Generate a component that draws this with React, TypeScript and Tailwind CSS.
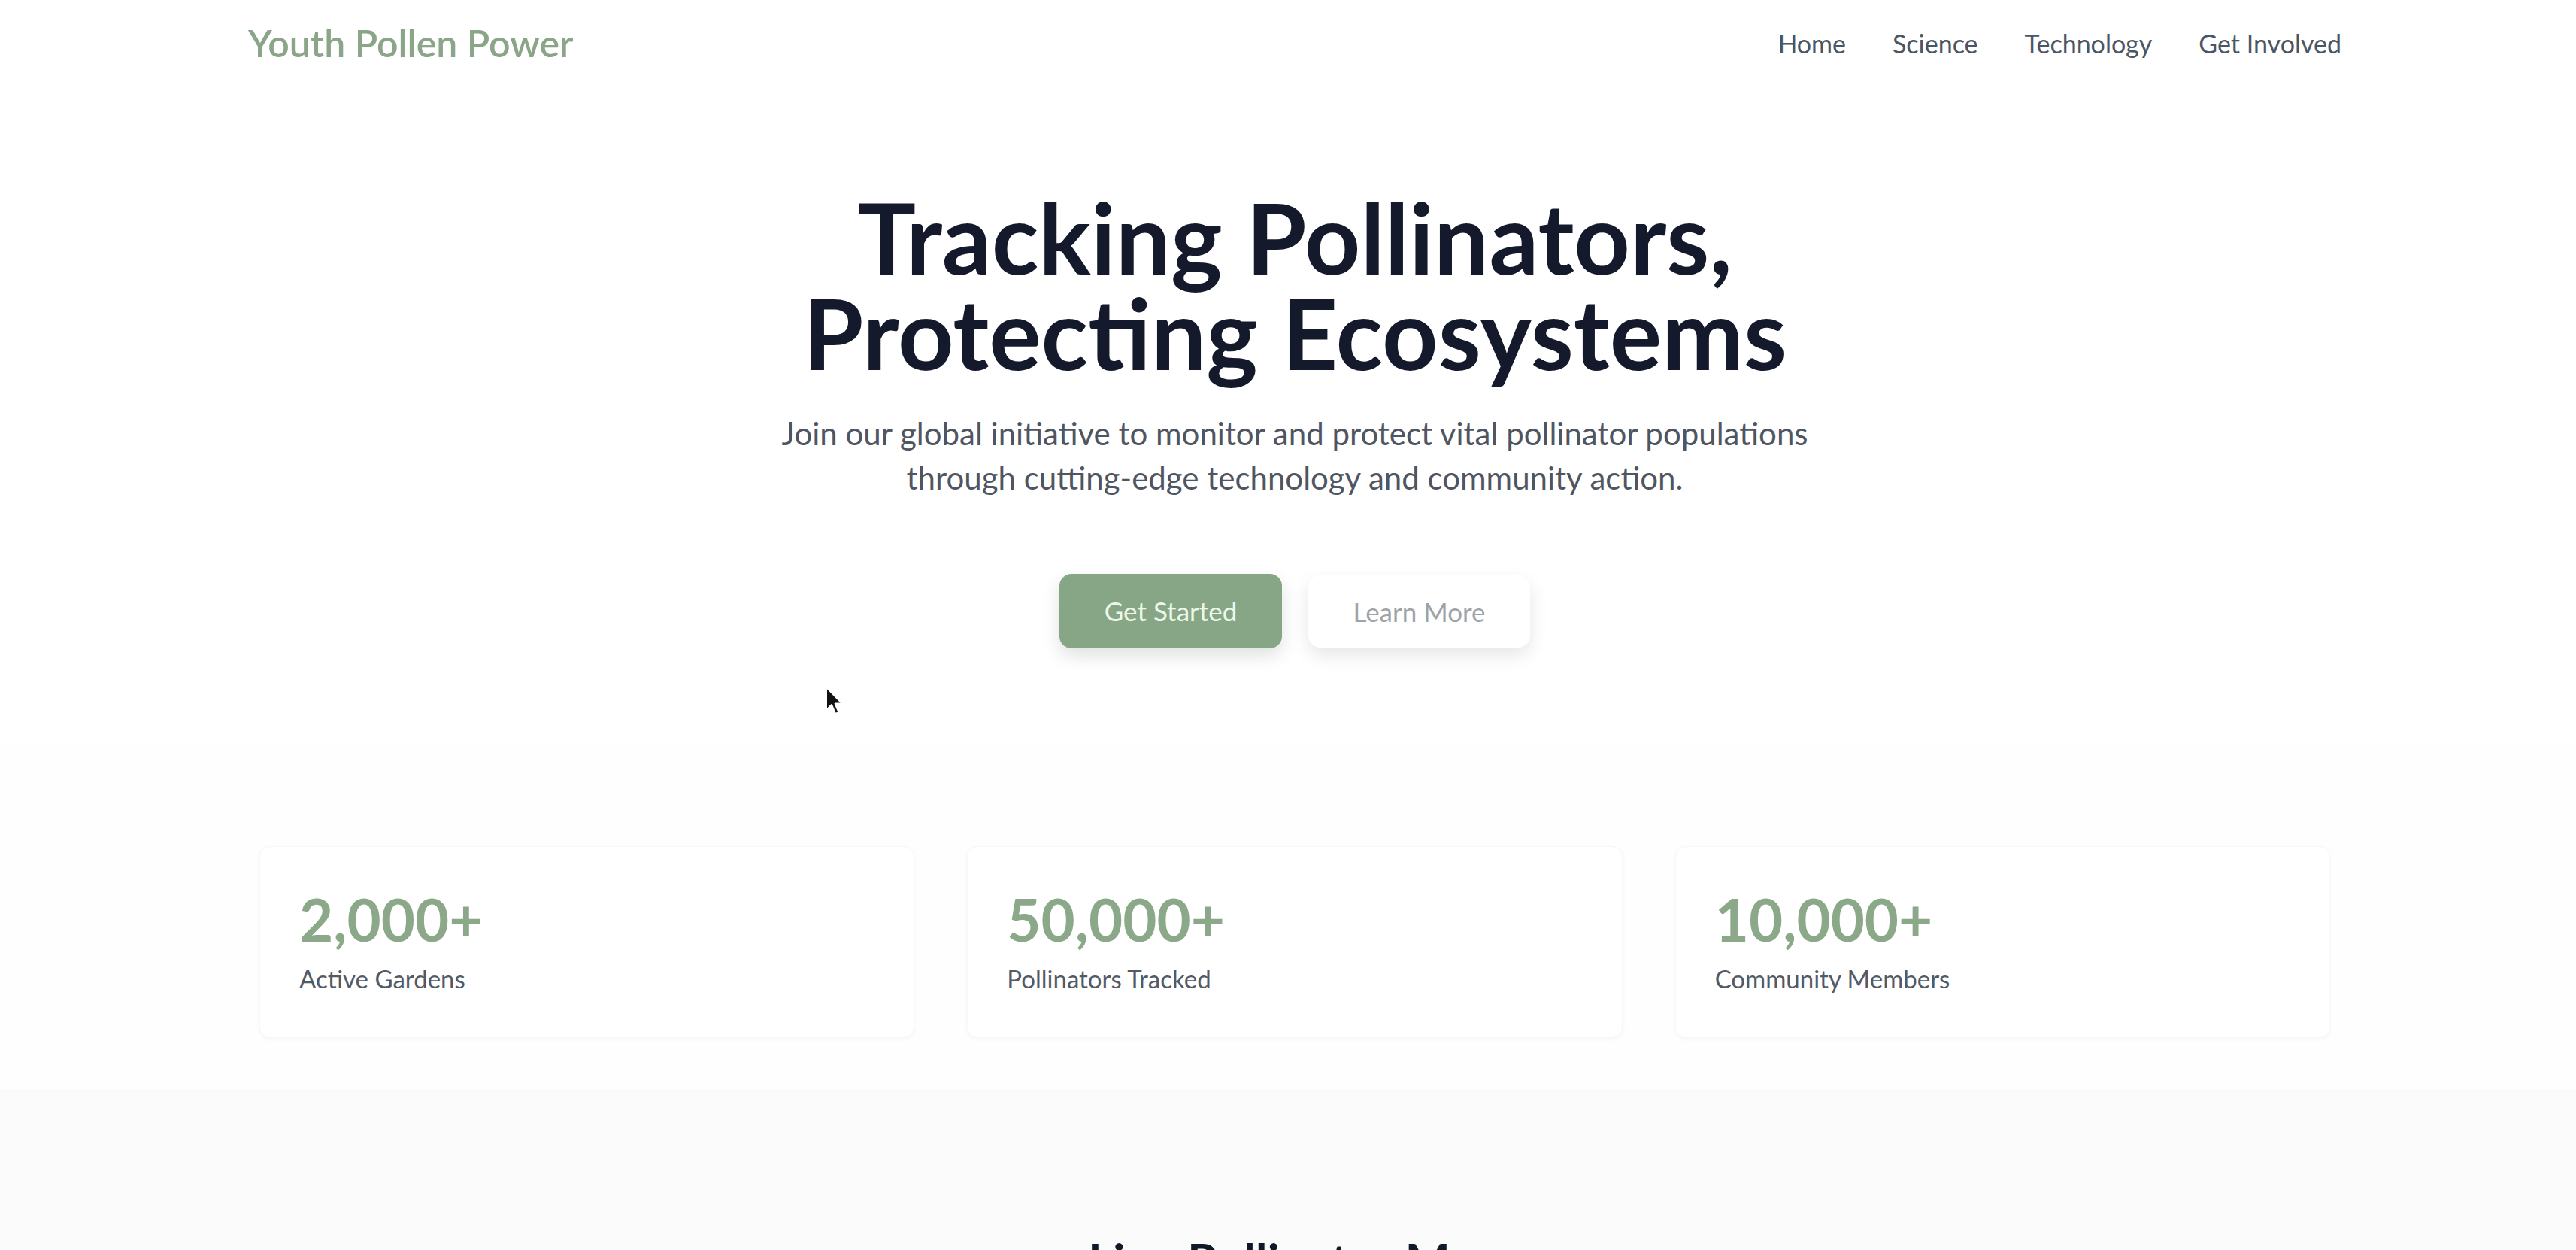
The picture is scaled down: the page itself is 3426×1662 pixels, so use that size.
import React from "react";

const font = { fontFamily: "Lato, 'Open Sans', 'Liberation Sans', sans-serif" };

function Stat({ value, label }: { value: string; label: string }) {
  return (
    <div className="bg-white rounded-[14px] p-[52px] shadow-[0_2px_6px_rgba(0,0,0,0.035)] border border-[#f7f7f7]">
      <div className="text-[78px] leading-[88px] font-bold text-[#8ba888]">{value}</div>
      <div className="mt-[9px] text-[33px] leading-[52px] text-[#525a66]">{label}</div>
    </div>
  );
}

export default function App() {
  return (
    <div className="relative min-h-screen bg-white overflow-hidden" style={font}>
      {/* Nav */}
      <header className="w-[2784px] ml-[calc(50%-1383px)] h-[114px] flex items-center justify-between">
        <div className="text-[50px] font-semibold text-[#8aa587]">Youth Pollen Power</div>
        <nav className="flex items-center gap-[62px] text-[34px] text-[#4b5563]">
          <a>Home</a>
          <a>Science</a>
          <a>Technology</a>
          <a>Get Involved</a>
        </nav>
      </header>

      {/* Hero */}
      <section className="w-[2784px] ml-[calc(50%-1383px)] flex flex-col items-center text-center pt-[138px] pb-[130px]">
        <h1 className="text-[130px] leading-[127px] font-bold text-[#141a2b]">
          <span className="block">Tracking Pollinators,</span>
          <span className="block">Protecting Ecosystems</span>
        </h1>
        <p className="mt-[41px] w-[1480px] text-[42px] leading-[59px] text-[#4f5661]">
          Join our global initiative to monitor and protect vital pollinator populations through cutting-edge
          technology and community action.
        </p>
        <div className="mt-[98px] flex gap-[35px]">
          <button className="h-[99px] w-[296px] rounded-[16px] bg-[#87a685] text-[35px] text-[#eef8ea] shadow-[0_10px_24px_rgba(0,0,0,0.12)]">
            Get Started
          </button>
          <button className="h-[96px] w-[295px] mt-[2px] rounded-[16px] bg-white text-[35px] text-[#9ea3a8] shadow-[0_10px_24px_rgba(0,0,0,0.10)]">
            Learn More
          </button>
        </div>
      </section>

      {/* Stats */}
      <section className="bg-[#fefefe] pt-[133px] pb-[68px]">
        <div className="w-[2784px] ml-[calc(50%-1383px)] px-[15px] grid grid-cols-3 gap-[70px]">
          <Stat value="2,000+" label="Active Gardens" />
          <Stat value="50,000+" label="Pollinators Tracked" />
          <Stat value="10,000+" label="Community Members" />
        </div>
      </section>

      {/* Map */}
      <section className="bg-[#fbfbfb] pt-[190px] pb-[200px]">
        <h2 className="w-[2784px] ml-[calc(50%-1383px)] text-center text-[64px] leading-[76px] font-bold text-[#111827]">
          Live Pollinator Map
        </h2>
        <div className="h-[600px]" />
      </section>

      {/* Cursor overlay */}
      <svg className="absolute left-[1097px] top-[912px]" width="26" height="40" viewBox="0 0 13 20">
        <path
          d="M1 1 L1 16 L4.5 12.5 L7 18.5 L9.2 17.6 L6.8 11.8 L11.5 11.8 Z"
          fill="#111"
          stroke="#fff"
          strokeWidth="1"
          strokeLinejoin="round"
        />
      </svg>
    </div>
  );
}
